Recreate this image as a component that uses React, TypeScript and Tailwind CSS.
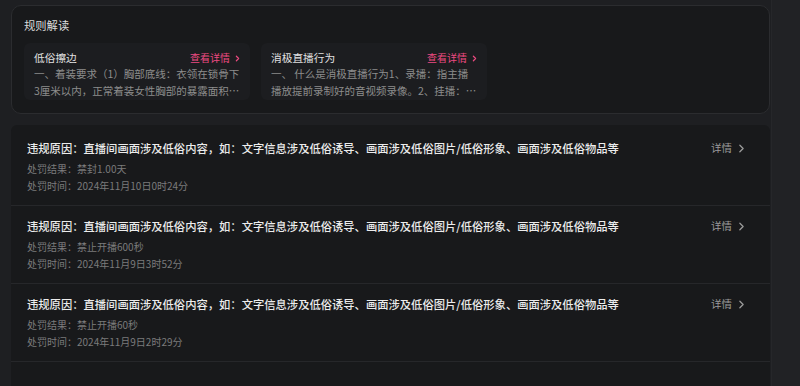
import React from "react";

const FONT = { fontFamily: '"Noto Sans CJK SC", "Noto Sans", sans-serif' };

function Chevron({ size, stroke, className }: { size: number; stroke: number; className?: string }) {
  return (
    <svg width={size} height={size} viewBox="0 0 24 24" fill="none" stroke="currentColor" strokeWidth={stroke} strokeLinecap="round" strokeLinejoin="round" className={className}>
      <path d="M9 6l6 6-6 6" />
    </svg>
  );
}

const cards = [
  {
    title: "低俗擦边",
    lines: ["一、着装要求（1）胸部底线：衣领在锁骨下", "3厘米以内，正常着装女性胸部的暴露面积…"],
  },
  {
    title: "消极直播行为",
    lines: ["一、 什么是消极直播行为1、录播：指主播", "播放提前录制好的音视频录像。2、挂播：…"],
  },
];

const title =
  "违规原因：直播间画面涉及低俗内容，如：文字信息涉及低俗诱导、画面涉及低俗图片/低俗形象、画面涉及低俗物品等";

const rows = [
  { result: "禁封1.00天", time: "2024年11月10日0时24分" },
  { result: "禁止开播600秒", time: "2024年11月9日3时52分" },
  { result: "禁止开播60秒", time: "2024年11月9日2时29分" },
];

export default function App() {
  return (
    <div className="w-[800px] h-[386px] overflow-hidden flex bg-[#1e1f22]" style={FONT}>
      <div className="w-[771px] shrink-0 pl-[11px] pr-[1px] pt-[5px]">
        <div className="rounded-[10px] border border-[#2b2c2f] bg-[#18191b] px-[12px] pt-[11px] pb-[13px]">
          <div className="text-[11.3px] leading-[16px] text-[#dcdcdc]">规则解读</div>
          <div className="mt-[10px] flex gap-[11px]">
            {cards.map((c) => (
              <div key={c.title} className="w-[226px] h-[57px] rounded-[6px] bg-[#1c1d20] pl-[10px] pr-[8px] pt-[8px]">
                <div className="flex items-center justify-between h-[14px]">
                  <span className="text-[10.7px] leading-[14px] text-[#e0e0e0]">{c.title}</span>
                  <span className="flex items-center gap-[3px] text-[10px] leading-[14px] text-[#ec4a80]">
                    查看详情
                    <Chevron size={9} stroke={3.2} />
                  </span>
                </div>
                {c.lines.map((l) => (
                  <div key={l} className="text-[10.5px] leading-[17px] text-[#8d8d8d] whitespace-nowrap overflow-hidden">
                    {l}
                  </div>
                ))}
              </div>
            ))}
          </div>
        </div>
        <div className="mt-[11px] rounded-t-[6px] bg-[#18191b] pt-[3px] h-[300px]">
          {rows.map((r) => (
            <div key={r.time} className="border-b border-[#26272a] pl-[16px] pr-[22px] pt-[12px] pb-[11px]">
              <div className="flex items-center justify-between h-[16px]">
                <span className="text-[11.3px] leading-[16px] text-[#ececec] font-medium whitespace-nowrap">{title}</span>
                <span className="flex items-center gap-[3px] text-[10.5px] leading-[16px] text-[#9a9a9a]">
                  详情
                  <Chevron size={13} stroke={2.4} />
                </span>
              </div>
              <div className="mt-[4px] text-[10px] leading-[17px] text-[#7b7b7b]">处罚结果：{r.result}</div>
              <div className="text-[10px] leading-[17px] text-[#7b7b7b]">处罚时间：{r.time}</div>
            </div>
          ))}
        </div>
      </div>
      <div className="flex-1 border-l border-[#26272a] bg-[#212225]" />
    </div>
  );
}
